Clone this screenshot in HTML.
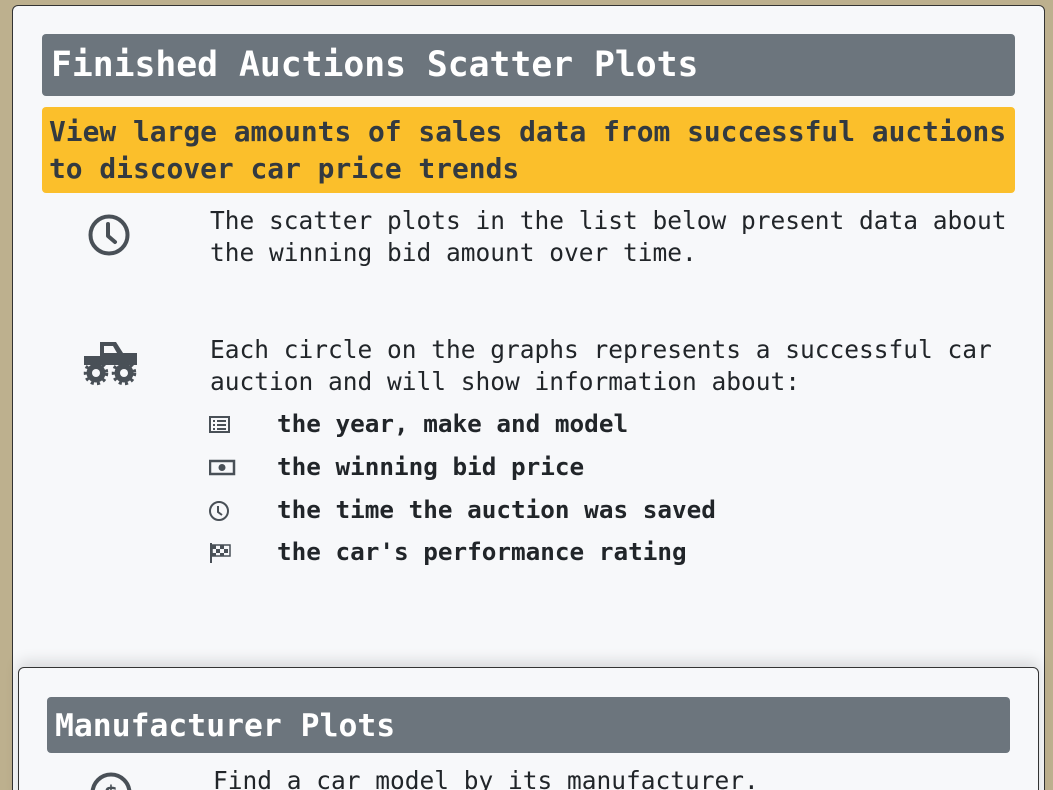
<!DOCTYPE html>
<html><head><style>
html,body{margin:0;padding:0;width:1053px;height:790px;overflow:hidden;background:#bdb08e;font-family:"DejaVu Sans Mono","Liberation Mono",monospace;position:relative;}
.card{position:absolute;left:12px;top:5px;width:1031px;height:800px;background:#f7f8fa;border:1px solid #333;border-radius:6px;}
.card2{position:absolute;left:18px;top:667px;width:1019px;height:140px;background:#f7f8fa;border:1px solid #333;border-radius:6px;box-shadow:0 -6px 14px rgba(0,0,0,.12);}
.t{position:absolute;white-space:pre;}
.h{background:#6c757d;color:#fff;font-weight:bold;border-radius:4px;}
.y{background:#fbbf2b;color:#333a40;font-weight:bold;border-radius:4px;}
.b{color:#212529;font-size:24.5px;line-height:32px;}
.li{color:#212529;font-size:24.3px;font-weight:bold;}
svg{position:absolute;}
</style></head><body>
<div class="card"></div>
<div class="t h" style="left:42px;top:34px;width:973px;height:62px;font-size:34.7px;line-height:62px;padding-left:9px;box-sizing:border-box;">Finished Auctions Scatter Plots</div>
<div class="t y" style="left:42px;top:107px;width:973px;height:86px;font-size:27.9px;line-height:37px;padding:6px 0 0 7px;box-sizing:border-box;">View large amounts of sales data from successful auctions
to discover car price trends</div>
<svg style="left:87px;top:213px" width="44" height="44" viewBox="0 0 44 44"><circle cx="22" cy="22" r="18.5" fill="none" stroke="#495057" stroke-width="4"/><path d="M21 11v12l7 6" fill="none" stroke="#495057" stroke-width="4" stroke-linecap="round" stroke-linejoin="round"/></svg>
<div class="t b" style="left:210px;top:205px;">The scatter plots in the list below present data about
the winning bid amount over time.</div>
<svg style="left:82px;top:340px" width="58" height="46" viewBox="0 0 58 46">
<path d="M2 16h16V2h16l7 11h14v12H2z" fill="#495057"/>
<path d="M22 6h9l4 7h-13z" fill="#f7f8fa"/>
<g fill="#495057">
<circle cx="14" cy="33" r="9.5"/><circle cx="42" cy="33" r="9.5"/>
<g stroke="#495057" stroke-width="3.5" stroke-dasharray="3 3.2"><circle cx="14" cy="33" r="10.5" fill="none"/><circle cx="42" cy="33" r="10.5" fill="none"/></g>
</g>
<circle cx="14" cy="33" r="4" fill="#f7f8fa"/><circle cx="42" cy="33" r="4" fill="#f7f8fa"/></svg>
<div class="t b" style="left:210px;top:334px;">Each circle on the graphs represents a successful car
auction and will show information about:</div>
<svg style="left:209px;top:415px" width="22" height="20" viewBox="0 0 22 20"><rect x="1" y="2" width="19" height="15" fill="none" stroke="#495057" stroke-width="2"/><path d="M4 6h2M4 10h2M4 14h2M8 6h9M8 10h9M8 14h9" stroke="#495057" stroke-width="2"/></svg>
<div class="t li" style="left:277px;top:409px;">the year, make and model</div>
<svg style="left:209px;top:459px" width="28" height="18" viewBox="0 0 28 18"><rect x="1" y="2" width="24" height="13" fill="none" stroke="#495057" stroke-width="2.5"/><circle cx="13" cy="8.5" r="3.5" fill="#495057"/></svg>
<div class="t li" style="left:277px;top:452px;">the winning bid price</div>
<svg style="left:208px;top:500px" width="24" height="24" viewBox="0 0 24 24"><circle cx="11" cy="11" r="9" fill="none" stroke="#495057" stroke-width="2"/><path d="M10 6v6l4 3" fill="none" stroke="#495057" stroke-width="2"/></svg>
<div class="t li" style="left:277px;top:495px;">the time the auction was saved</div>
<svg style="left:209px;top:542px" width="24" height="22" viewBox="0 0 24 22"><path d="M2 1v20" stroke="#495057" stroke-width="2"/><rect x="3" y="3" width="18" height="11" fill="none" stroke="#495057" stroke-width="1.5"/><path d="M3 3h4v4h-4zM11 3h4v4h-4zM7 7h4v4h-4zM15 7h4v4h-4zM3 11h4v3h-4zM11 11h4v3h-4z" fill="#495057"/></svg>
<div class="t li" style="left:277px;top:537px;">the car's performance rating</div>
<div class="card2"></div>
<div class="t h" style="left:47px;top:697px;width:963px;height:56px;font-size:31.4px;line-height:58px;padding-left:8px;box-sizing:border-box;">Manufacturer Plots</div>
<svg style="left:89px;top:771px" width="44" height="44" viewBox="0 0 44 44"><circle cx="22" cy="22" r="18.5" fill="none" stroke="#495057" stroke-width="4"/><text x="22" y="29" font-size="20" font-weight="bold" text-anchor="middle" fill="#495057" font-family="DejaVu Sans">$</text></svg>
<div class="t b" style="left:213px;top:765px;">Find a car model by its manufacturer.</div>
</body></html>
